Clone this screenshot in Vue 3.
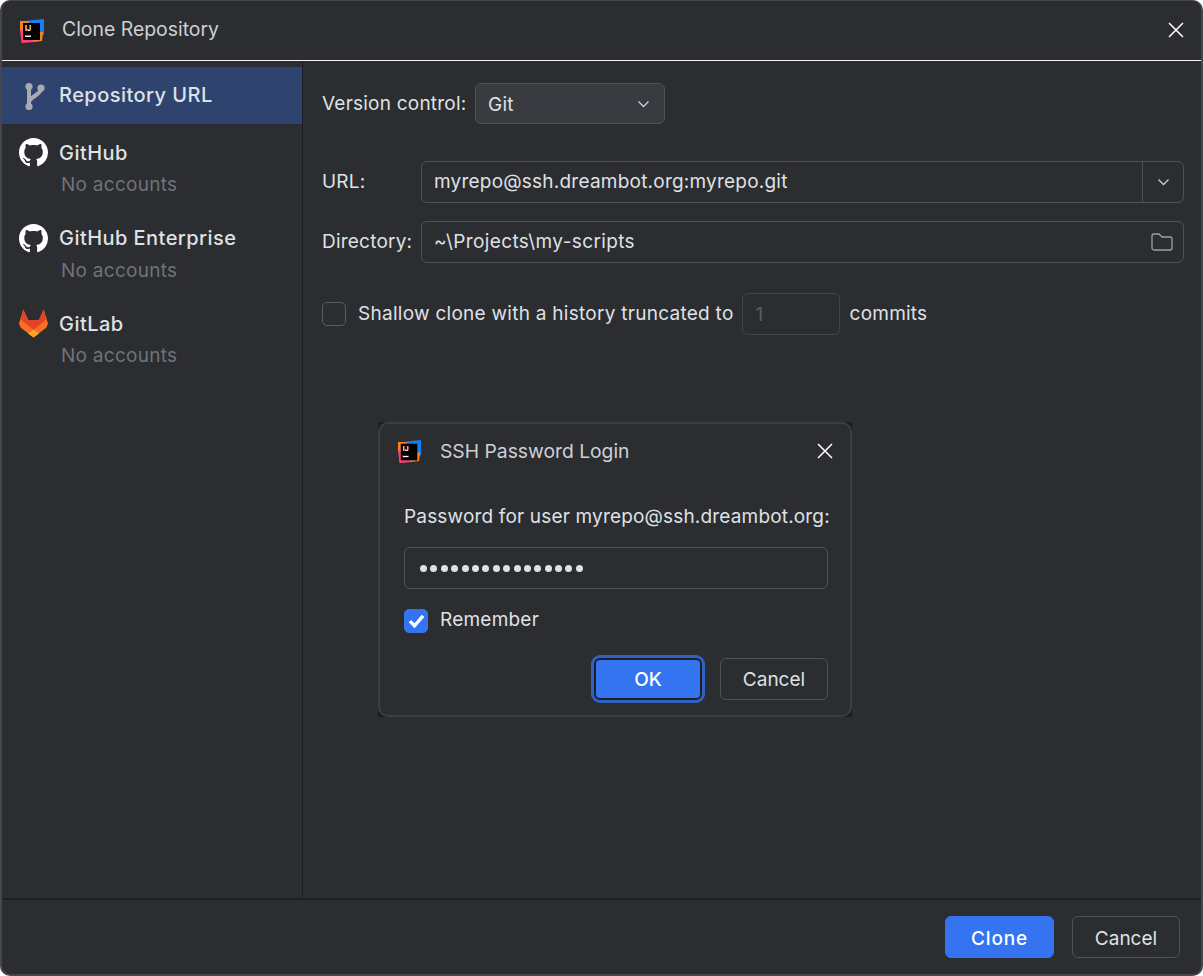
<script setup>
import { ref } from 'vue';

const accounts = ref([
  { name: 'GitHub', icon: 'github' },
  { name: 'GitHub Enterprise', icon: 'github' },
  { name: 'GitLab', icon: 'gitlab' }
]);

const githubPath = 'M8 0C3.58 0 0 3.58 0 8c0 3.54 2.29 6.53 5.47 7.59.4.07.55-.17.55-.38 0-.19-.01-.82-.01-1.49-2.01.37-2.53-.49-2.69-.94-.09-.23-.48-.94-.82-1.13-.28-.15-.68-.52-.01-.53.63-.01 1.08.58 1.23.82.72 1.21 1.87.87 2.33.66.07-.52.28-.87.51-1.07-1.78-.2-3.64-.89-3.64-3.95 0-.87.31-1.59.82-2.15-.08-.2-.36-1.02.08-2.12 0 0 .67-.21 2.2.82.64-.18 1.32-.27 2-.27s1.36.09 2 .27c1.53-1.04 2.2-.82 2.2-.82.44 1.1.16 1.92.08 2.12.51.56.82 1.27.82 2.15 0 3.07-1.87 3.75-3.65 3.95.29.25.54.73.54 1.48 0 1.07-.01 1.93-.01 2.2 0 .21.15.46.55.38A8.01 8.01 0 0 0 16 8c0-4.42-3.58-8-8-8z';
</script>

<template>
  <div class="window">
    <header class="titlebar">
      <svg class="app-icon" viewBox="0 0 26 26">
        <path d="M9 2.500L25 1v16h-4V5H9z" fill="#1a7df0" />
        <path d="M1 3h9v2H4v9H1z" fill="#f6831e" />
        <path d="M1 12h3v10h11v2L4 25H2.500z" fill="#ff3d6e" />
        <path d="M21 14h3l-1 9-9 1v-2h7z" fill="#f6831e" />
        <rect x="4" y="5" width="17" height="17" fill="#000" />
        <text x="6" y="12.500" class="icon-letters">IJ</text>
        <rect x="6" y="17.500" width="6" height="1.400" fill="#fff" />
      </svg>
      <span class="title">Clone Repository</span>
      <svg class="close" viewBox="0 0 16 16"><path d="M1 1l14 14M15 1L1 15" stroke="#fff" stroke-width="1.5" fill="none" /></svg>
    </header>

    <div class="body">
      <aside class="sidebar">
        <div class="nav-item selected">
          <svg class="nav-icon" viewBox="0 0 29 28">
            <circle cx="10" cy="5" r="3.600" fill="#a8abb2" />
            <circle cx="22" cy="6.500" r="3.600" fill="#a8abb2" />
            <circle cx="10" cy="25" r="3.600" fill="#a8abb2" />
            <path d="M10 5v20M22 7c0 6-9 7-12 13" stroke="#a8abb2" stroke-width="4" fill="none" />
          </svg>
          <span class="nav-name">Repository URL</span>
        </div>
        <div v-for="acc in accounts" :key="acc.name" class="account">
          <div class="account-top">
            <svg v-if="acc.icon === 'github'" class="nav-icon" viewBox="0 0 16 16"><path :d="githubPath" fill="#fff" fill-rule="evenodd" /></svg>
            <svg v-else class="nav-icon" viewBox="0 0 29 28">
              <path d="M4.300 0l5 10.700h10.400l5-10.700L29 14l-1.500 4-13 10-13-10L0 14z" fill="#fc6d26" />
              <path d="M4.300 0l5 10.700h10.400l5-10.700L27 10 14.500 20.500 2 10z" fill="#e24329" />
              <path d="M14.500 20l5.500 4-5.500 4L9 24z" fill="#fca326" />
            </svg>
            <span class="nav-name">{{ acc.name }}</span>
          </div>
          <div class="no-accounts">No accounts</div>
        </div>
      </aside>

      <main class="content">
        <div class="row vcs-row">
          <label class="vcs-label">Version control:</label>
          <div class="combo">
            <span class="git-text">Git</span>
            <svg class="chevron" viewBox="0 0 12 8"><path d="M1 1.500l5 5 5-5" stroke="#ced0d6" stroke-width="1.300" fill="none" /></svg>
          </div>
        </div>

        <div class="row url-row">
          <label class="field-label lifted">URL:</label>
          <div class="field">
            <span class="field-text lifted">myrepo@ssh.dreambot.org:myrepo.git</span>
            <span class="field-arrow">
              <svg class="chevron" viewBox="0 0 12 8"><path d="M1 1.500l5 5 5-5" stroke="#ced0d6" stroke-width="1.300" fill="none" /></svg>
            </span>
          </div>
        </div>

        <div class="row dir-row">
          <label class="field-label lifted">Directory:</label>
          <div class="field">
            <span class="field-text dir-text lifted">~\Projects\my-scripts</span>
            <svg class="folder" viewBox="0 0 22 18"><path d="M1 3a2 2 0 0 1 2-2h5l3 3h8a2 2 0 0 1 2 2v9a2 2 0 0 1-2 2H3a2 2 0 0 1-2-2z" stroke="#9da0a8" stroke-width="1.300" fill="none" /></svg>
          </div>
        </div>

        <div class="row shallow-row">
          <span class="checkbox"></span>
          <span class="shallow-text lifted">Shallow clone with a history truncated to</span>
          <span class="depth">1</span>
          <span class="lifted">commits</span>
        </div>
      </main>
    </div>

    <footer class="footer">
      <button class="btn primary clone">Clone</button>
      <button class="btn">Cancel</button>
    </footer>

    <div class="dialog-corners">
      <div class="dialog">
        <div class="dialog-title">
          <svg class="app-icon" viewBox="0 0 26 26">
            <path d="M9 2.500L25 1v16h-4V5H9z" fill="#1a7df0" />
            <path d="M1 3h9v2H4v9H1z" fill="#f6831e" />
            <path d="M1 12h3v10h11v2L4 25H2.500z" fill="#ff3d6e" />
            <path d="M21 14h3l-1 9-9 1v-2h7z" fill="#f6831e" />
            <rect x="4" y="5" width="17" height="17" fill="#000" />
            <text x="6" y="12.500" class="icon-letters">IJ</text>
            <rect x="6" y="17.500" width="6" height="1.400" fill="#fff" />
          </svg>
          <span class="title">SSH Password Login</span>
          <svg class="close" viewBox="0 0 16 16"><path d="M1 1l14 14M15 1L1 15" stroke="#fff" stroke-width="1.5" fill="none" /></svg>
        </div>
        <div class="dialog-body">
          <div class="prompt">Password for user myrepo@ssh.dreambot.org:</div>
          <div class="password">
            <i v-for="n in 16" :key="n" class="dot"></i>
          </div>
          <div class="remember">
            <span class="checkbox checked">
              <svg viewBox="0 0 16 16"><path d="M3 8.500l3.500 3.500L13 4.500" stroke="#fff" stroke-width="2.600" fill="none" /></svg>
            </span>
            <span class="lifted">Remember</span>
          </div>
          <div class="dialog-buttons">
            <button class="btn primary focused">OK</button>
            <button class="btn">Cancel</button>
          </div>
        </div>
      </div>
    </div>
  </div>
</template>

<style scoped>
.window {
  position: relative;
  width: 1203px;
  height: 976px;
  box-sizing: border-box;
  border: 2px solid #46474a;
  border-top-width: 1px;
  border-radius: 10px;
  background-color: #2b2d30;
  color: #dfe1e5;
  font-family: Inter, "Liberation Sans", sans-serif;
  font-size: 19px;
  letter-spacing: 0.220px;
  display: flex;
  flex-direction: column;
  overflow: hidden;
}

.lifted {
  margin-bottom: 2px;
}

.titlebar {
  height: 59px;
  flex: none;
  display: flex;
  align-items: center;
  padding: 0 17px;
  border-bottom: 1px solid #f2f2f2;
  box-sizing: content-box;
}

.app-icon {
  width: 26px;
  height: 26px;
  flex: none;
}

.icon-letters {
  font-size: 7px;
  font-weight: 700;
  fill: #fff;
  letter-spacing: 0;
}

.title {
  margin-left: 17px;
  font-size: 19.400px;
  color: #ced0d6;
  letter-spacing: 0;
}

.titlebar .title {
  margin-bottom: 4px;
}

.close {
  margin-left: auto;
  width: 16px;
  height: 16px;
}

.titlebar .close {
  margin-bottom: 2px;
}

.body {
  flex: 1;
  display: flex;
  min-height: 0;
}

.sidebar {
  width: 301px;
  flex: none;
  box-sizing: border-box;
  border-right: 1px solid #1e1f22;
  padding-top: 6px;
}

.nav-item {
  height: 57px;
  display: flex;
  align-items: center;
  padding-left: 17px;
  background-color: #2e436e;
}

.nav-icon {
  width: 29px;
  height: 29px;
  flex: none;
}

.nav-name {
  margin-left: 11px;
  font-size: 20px;
  font-weight: 500;
  letter-spacing: 0.450px;
}

.selected .nav-name {
  margin-bottom: 2px;
}

.account {
  height: 85.500px;
  box-sizing: border-box;
  padding: 14px 0 0 17px;
}

.account-top {
  display: flex;
  align-items: center;
  height: 29px;
}

.no-accounts {
  margin: 6px 0 0 42px;
  color: #6f737a;
  font-size: 19px;
  letter-spacing: 0.270px;
}

.content {
  flex: 1;
  padding: 0 17px 0 19px;
}

.row {
  display: flex;
  align-items: center;
}

.vcs-row {
  margin-top: 22px;
}

.vcs-label {
  width: 153px;
  flex: none;
}

.combo {
  width: 190px;
  height: 41px;
  box-sizing: border-box;
  border: 1px solid #4e5157;
  border-radius: 6px;
  background-color: #393b40;
  display: flex;
  align-items: center;
  justify-content: space-between;
  padding: 0 14px 0 12px;
}

.git-text {
  margin-top: 2px;
}

.chevron {
  width: 13px;
  height: 8px;
}

.url-row {
  margin-top: 37px;
}

.dir-row {
  margin-top: 18px;
}

.field-label {
  width: 99px;
  flex: none;
}

.field {
  flex: 1;
  height: 42px;
  box-sizing: border-box;
  border: 1px solid #4e5157;
  border-radius: 6px;
  display: flex;
  align-items: center;
  padding-left: 12px;
}

.field-text {
  flex: 1;
}

.dir-text {
  letter-spacing: 0.380px;
}

.field-arrow {
  width: 40px;
  height: 100%;
  border-left: 1px solid #4e5157;
  display: flex;
  align-items: center;
  justify-content: center;
}

.folder {
  width: 22px;
  height: 18px;
  margin-right: 10px;
}

.shallow-row {
  margin-top: 30px;
}

.checkbox {
  width: 24px;
  height: 24px;
  box-sizing: border-box;
  border: 1px solid #5a5d63;
  border-radius: 5px;
  flex: none;
  display: flex;
}

.shallow-text {
  margin-left: 12px;
  letter-spacing: 0.270px;
}

.depth {
  width: 98px;
  height: 42px;
  box-sizing: border-box;
  margin: 0 10px 0 8px;
  padding-left: 13px;
  border: 1px solid #43454a;
  border-radius: 6px;
  color: #5a5d63;
  display: flex;
  align-items: center;
}

.footer {
  height: 76px;
  flex: none;
  box-sizing: border-box;
  border-top: 2px solid #1e1f22;
  display: flex;
  align-items: center;
  justify-content: flex-end;
  gap: 18px;
  padding: 0 21px 0 0;
}

.btn {
  width: 108px;
  height: 42px;
  box-sizing: border-box;
  border: 1px solid #4e5157;
  border-radius: 6px;
  background: transparent;
  color: #dfe1e5;
  font-family: inherit;
  font-size: 19px;
  letter-spacing: 0;
  padding: 0;
}

.footer .btn {
  padding-top: 2px;
}

.primary {
  background-color: #3574f0;
  border-color: #3574f0;
  color: #fff;
  font-weight: 500;
}

.clone {
  width: 109px;
  letter-spacing: 0.800px;
}

/* the floating login dialog, it sits over the main window */
.dialog-corners {
  position: absolute;
  left: 376px;
  top: 421px;
  width: 474px;
  height: 295px;
  background-color: #1c1d1f;
}

.dialog {
  height: 100%;
  box-sizing: border-box;
  border: 2px solid #3c3e42;
  border-radius: 10px;
  background-color: #2b2d30;
  display: flex;
  flex-direction: column;
}

.dialog-title {
  height: 54px;
  flex: none;
  display: flex;
  align-items: center;
  padding: 0 17px;
}

.dialog-title .app-icon {
  width: 25px;
  height: 25px;
}

.dialog-title .title {
  margin-left: 18px;
  font-size: 19.300px;
}

.dialog-body {
  padding: 27px 22px 0 24px;
}

.prompt {
  line-height: 24px;
  white-space: nowrap;
  letter-spacing: 0.170px;
}

.password {
  height: 42px;
  margin-top: 18px;
  box-sizing: border-box;
  border: 1px solid #4e5157;
  border-radius: 6px;
  display: flex;
  align-items: center;
  gap: 3.400px;
  padding-left: 15px;
}

.dot {
  width: 7px;
  height: 7px;
  border-radius: 50%;
  background-color: #dfe1e5;
}

.remember {
  display: flex;
  align-items: center;
  margin-top: 19px;
  gap: 12px;
}

.checked {
  background-color: #3574f0;
  border-color: #3574f0;
  align-items: center;
  justify-content: center;
}

.checked svg {
  width: 21px;
  height: 21px;
}

.dialog-buttons {
  display: flex;
  justify-content: flex-end;
  gap: 18px;
  margin-top: 25px;
}

.focused {
  outline: 3px solid #2f62c4;
  outline-offset: 0;
  border: 2px solid #1e1f22;
}
</style>
